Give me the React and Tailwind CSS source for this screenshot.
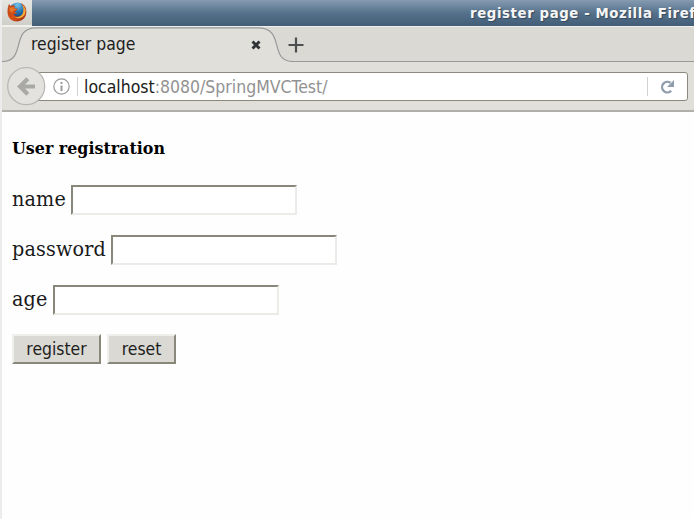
import React from "react";

const sans = "font-['DejaVu_Sans_Condensed','DejaVu_Sans',sans-serif] [font-stretch:condensed]";
const serif = "font-['DejaVu_Serif_Condensed','DejaVu_Serif',serif] [font-stretch:condensed]";

function FirefoxLogo() {
  return (
    <svg width="20" height="20" viewBox="0 0 20 20">
      <defs>
        <radialGradient id="globe" cx=".5" cy=".15" r=".8">
          <stop offset="0" stopColor="#79c4e6" />
          <stop offset=".5" stopColor="#2976b5" />
          <stop offset="1" stopColor="#173967" />
        </radialGradient>
        <linearGradient id="fox" x1="0" y1="0" x2="1" y2="1">
          <stop offset="0" stopColor="#b8451b" />
          <stop offset=".55" stopColor="#d94f16" />
          <stop offset="1" stopColor="#9c2912" />
        </linearGradient>
      </defs>
      <circle cx="10.5" cy="9" r="8.6" fill="url(#globe)" />
      <path d="M14 1.2C17.4 2.6 19.6 6 19.3 10.5C19 16 15 19.4 10 19.4C4.3 19.4.5 15.6.5 10C.5 7 .9 4.5 2 2L3.6 4C5.4 2.9 7 3.3 8.2 4.3C6.9 4.8 7 6 8.4 6.4L10.5 6.8C10.5 8 9.2 8.5 8.2 9.2C8 10.5 9 11.2 10.4 11.1C8.8 12.4 7.4 12 6.4 11.4C7.2 15.5 13.8 15.6 15.8 11.7C17.4 8.6 16.7 4.2 14 1.2Z" fill="url(#fox)" />
      <path d="M15.2 2.4C18.8 5.8 19.4 10.2 17 13.6C14.6 16.8 10.5 17 7.6 15.3C12 15.7 15.2 13.7 16.2 10.2C16.8 7.6 16.4 4.8 15.2 2.4Z" fill="#f0b040" />
      <path d="M2.3 4.5L3.7 5.8L7 4.5L6.2 6.2L9.4 7.3L6 9.2L5.5 11L2.6 9Z" fill="#e87824" />
    </svg>
  );
}

function TitleBar() {
  return (
    <div className="flex h-[26px] shrink-0">
      <div className="flex w-[30px] justify-center border-b border-[#efefec] bg-linear-to-b from-[#e6e6e3] to-[#cfcfca] pt-[2px]">
        <FirefoxLogo />
      </div>
      <div className="flex-1 overflow-hidden bg-linear-to-b from-[#859bb1] via-[#56718b] to-[#425e77] pl-[438px]">
        <span className="block whitespace-nowrap font-['DejaVu_Sans',sans-serif] text-[13.3px] leading-[27px] font-bold tracking-[0.6px] text-[#f6f6f6] [text-shadow:1px_1px_1px_#34495c]">
          register page - Mozilla Firef
        </span>
      </div>
    </div>
  );
}

function TabStrip() {
  return (
    <div className="relative h-9 shrink-0 bg-[#dad9d4]">
      <svg className="absolute inset-0" width="692" height="36" viewBox="0 0 692 36">
        <path d="M0 35.5C25 35.5 8 1.8 34 1.8H256C284 1.8 266 35.5 291 35.5V36H0Z" fill="#e0dfda" />
        <path d="M0 .5H692" stroke="#f0f0ed" />
        <path d="M0 35.5C25 35.5 8 1.8 34 1.8H256C284 1.8 266 35.5 291 35.5H692" fill="none" stroke="#97999a" strokeWidth="1.2" />
        <path d="M250.5 15.5L257.5 22.5M257.5 15.5L250.5 22.5" stroke="#2e3436" strokeWidth="2.9" />
        <path d="M286.5 19H301.5M294 11.5V26.5" stroke="#4c4f50" strokeWidth="2.2" />
      </svg>
      <div className={`${sans} relative pl-[29px] text-[17.4px] leading-9 text-[#1d1d1d]`}>register page</div>
    </div>
  );
}

function NavBar() {
  return (
    <div className="flex h-[50px] shrink-0 items-start border-b-2 border-[#b0afa9] bg-[#e0dfda] pt-[5px] pl-[5px]">
      <svg className="relative z-10 shrink-0" width="39" height="39" viewBox="0 0 39 39">
        <circle cx="19.2" cy="19.2" r="18.5" fill="#e3e2de" stroke="#b9b8b4" strokeWidth="1.3" />
        <path d="M28 19.5H14M20.8 11.7L13 19.5L20.8 27.3" fill="none" stroke="#a9a9a5" strokeWidth="4.2" />
      </svg>
      <div className="mt-[5px] -ml-[9px] flex h-[29px] w-[651px] items-center rounded-r-[3px] border border-[#8c897c] bg-white pl-[15px]">
        <svg width="17" height="17" viewBox="0 0 17 17" fill="none" stroke="#9b9b9b">
          <circle cx="8.5" cy="8.5" r="7.7" strokeWidth="1.2" />
          <path d="M8.5 7.5V13M8.5 4V6" strokeWidth="2" />
        </svg>
        <div className="ml-[7px] h-[19px] w-px bg-[#d0d0d0]" />
        <div className={`${sans} ml-[6px] flex-1 text-[17.5px] leading-[26px] whitespace-nowrap text-[#929292]`}>
          <span className="text-[#202020]">localhost</span>:8080/SpringMVCTest/
        </div>
        <div className="mr-3 h-[19px] w-px bg-[#d0d0d0]" />
        <svg className="mr-[13px]" width="14" height="14" viewBox="0 0 14 14">
          <path d="M11.2 10.8A5.3 5.3 0 1 1 10.5 2.8" fill="none" stroke="#8e9eac" strokeWidth="2.3" />
          <path d="M14 0V7H7Z" fill="#8e9eac" />
        </svg>
      </div>
    </div>
  );
}

function Field({ label, type = "text" }) {
  return (
    <label className="flex h-[30px] items-start">
      <span className="mr-[5.5px] leading-[28px] tracking-[0.15px]">{label}</span>
      <input type={type} className="h-[30px] w-[226px] border-2 border-t-[#89867a] border-r-[#ebebe7] border-b-[#ebebe7] border-l-[#89867a] bg-white px-1 outline-none" />
    </label>
  );
}

const button = "h-[30px] border-2 border-t-[#efefec] border-r-[#89867a] border-b-[#89867a] border-l-[#efefec] bg-[#dad9d4] text-[17.4px] leading-[25px] text-[#1d1d1d]";

export default function App() {
  return (
    <div className="h-[519px] w-[694px] overflow-hidden bg-[#ececec] pl-[2px]">
      <div className="flex h-full flex-col bg-[#fefefe]">
        <TitleBar />
        <TabStrip />
        <NavBar />
        <form className={`${serif} flex flex-col pl-[10px] text-[21.3px] text-[#1a1a1a]`}>
          <h5 className="mt-[25px] font-['DejaVu_Serif',serif] text-[15.9px] leading-6 font-bold text-black [font-stretch:normal]">User registration</h5>
          <div className="mt-[24.3px] flex flex-col gap-[19.7px]">
            <Field label="name" />
            <Field label="password" type="password" />
            <Field label="age" />
            <div className={`${sans} flex gap-[6px]`}>
              <button type="button" className={`${button} w-[89px]`}>register</button>
              <button type="reset" className={`${button} w-[69px]`}>reset</button>
            </div>
          </div>
        </form>
      </div>
    </div>
  );
}
